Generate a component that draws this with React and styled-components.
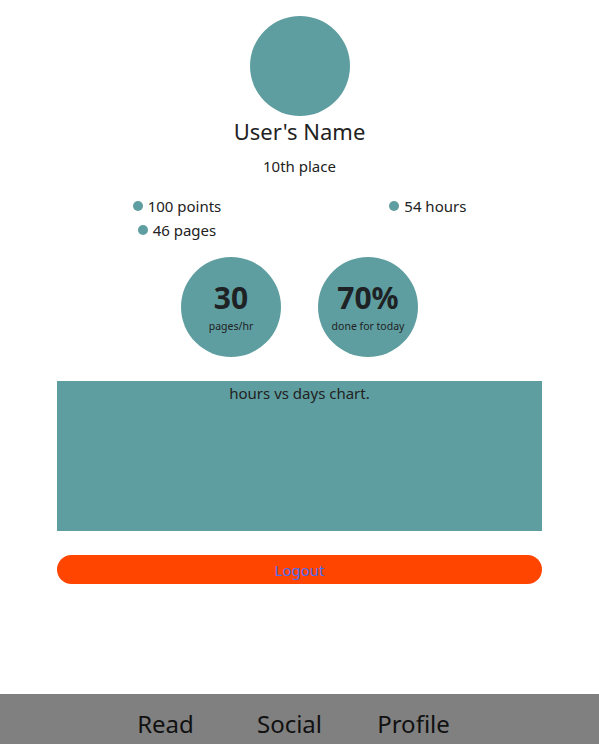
import React from 'react';
import styled, { createGlobalStyle } from 'styled-components';

const GlobalStyle = createGlobalStyle`
  html, body {
    margin: 0;
    padding: 0;
    background: #ffffff;
  }
  body {
    font-family: "Noto Sans", "Open Sans", sans-serif;
    color: #222;
  }
`;

const teal = '#5f9ea0';

const Page = () => {
    const stats = [
        ['100 points', '46 pages'],
        ['54 hours'],
    ];

    return (
        <Screen>
            <GlobalStyle />
            <Content>
                <Avatar />
                <Name>User's Name</Name>
                <Place>10th place</Place>
                <Stats>
                    {stats.map((col, i) => (
                        <StatColumn key={i}>
                            {col.map((s) => (
                                <Stat key={s}>{s}</Stat>
                            ))}
                        </StatColumn>
                    ))}
                </Stats>
                <Badges>
                    <Badge>
                        <BadgeValue>30</BadgeValue>
                        <BadgeLabel>pages/hr</BadgeLabel>
                    </Badge>
                    <Badge>
                        <BadgeValue>70%</BadgeValue>
                        <BadgeLabel>done for today</BadgeLabel>
                    </Badge>
                </Badges>
                <Chart>hours vs days chart.</Chart>
                <LogoutButton>Logout</LogoutButton>
            </Content>
            <NavBar>
                <NavItem>Read</NavItem>
                <NavItem>Social</NavItem>
                <NavItem>Profile</NavItem>
            </NavBar>
        </Screen>
    );
}

const Screen = styled.div`
height: 744px;
display: flex;
flex-direction: column;
justify-content: space-between;
`

const Content = styled.div`
display: flex;
flex-direction: column;
align-items: center;
padding: 16px 57px 0;
`

const Avatar = styled.div`
width: 100px;
height: 100px;
border-radius: 50%;
background: ${teal};
`

const Name = styled.h1`
margin: 0;
font-size: 22px;
font-weight: normal;
line-height: 30px;
`

const Place = styled.p`
margin: 9px 0 0;
font-size: 15px;
line-height: 22px;
`

const Stats = styled.div`
display: flex;
gap: 168px;
margin-top: 17px;
`

const StatColumn = styled.ul`
margin: 0;
padding: 0;
list-style: none;
display: flex;
flex-direction: column;
align-items: center;
`

const Stat = styled.li`
font-size: 15px;
line-height: 24px;
display: flex;
align-items: center;
&::before {
    content: "";
    width: 10px;
    height: 10px;
    border-radius: 50%;
    background: ${teal};
    margin-right: 5px;
}
`

const Badges = styled.div`
display: flex;
gap: 37px;
margin-top: 15px;
`

const Badge = styled.div`
width: 100px;
height: 100px;
border-radius: 50%;
background: ${teal};
display: flex;
flex-direction: column;
align-items: center;
justify-content: center;
color: #1e2224;
`

const BadgeValue = styled.div`
font-size: 30px;
font-weight: bold;
line-height: 34px;
`

const BadgeLabel = styled.div`
font-size: 10.5px;
line-height: 14px;
margin-top: 4px;
`

const Chart = styled.div`
align-self: stretch;
height: 150px;
margin-top: 24px;
background: ${teal};
text-align: center;
font-size: 15px;
line-height: 24px;
`

const LogoutButton = styled.button`
align-self: stretch;
height: 29px;
margin-top: 24px;
border: none;
border-radius: 15px;
background: #ff4500;
color: #4a6df0;
font-family: inherit;
font-size: 15px;
padding: 0;
`

const NavBar = styled.nav`
height: 50px;
background: #808080;
display: flex;
justify-content: center;
align-items: flex-end;
padding: 0 20px 4px 0;
box-sizing: border-box;
`

const NavItem = styled.span`
width: 124px;
text-align: center;
font-size: 24px;
line-height: 32px;
color: #111;
`

export default Page
